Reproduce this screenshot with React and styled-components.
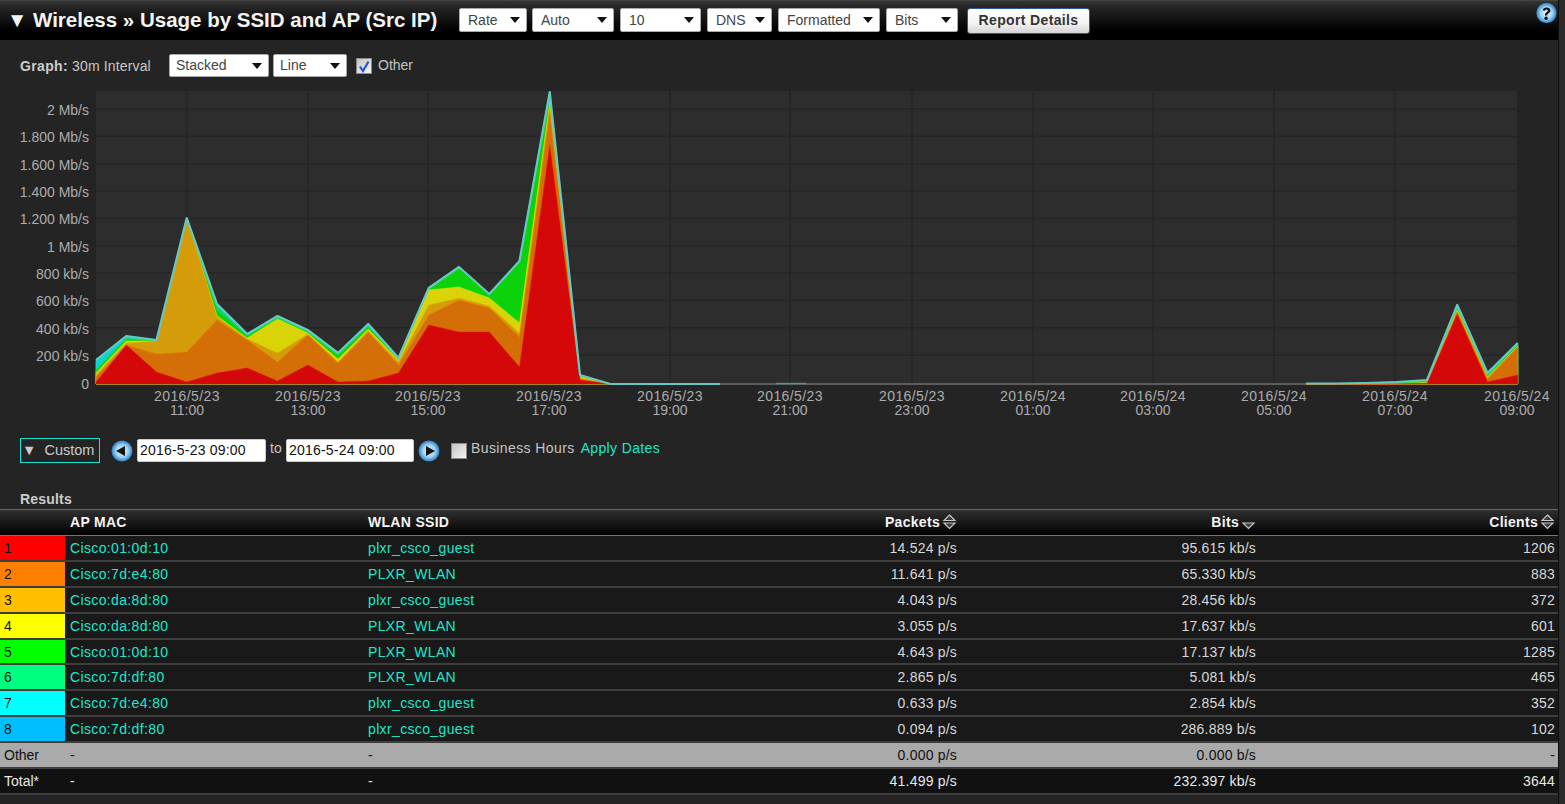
import React from "react";
import styled, { createGlobalStyle } from "styled-components";

const Global = createGlobalStyle`
  html, body { margin: 0; padding: 0; background: #2b2b2b; height: 100%; overflow: hidden; }
  body { font-family: "Liberation Sans", Arial, sans-serif; font-size: 14px; color: #ddd; }
`;

const Page = styled.div`
  width: 1558px;
  height: 804px;
  background: #242424;
  border-right: 1px solid #0c0c0c;
  display: flex;
  flex-direction: column;
`;

const Header = styled.header`
  height: 39px;
  flex: none;
  border-top: 1px solid #444;
  background: linear-gradient(#343434 0, #222 8px, #000 30px, #000 100%);
  display: flex;
  align-items: flex-start;
  padding-left: 7px;
`;

const Title = styled.h1`
  margin: 3px 0 0;
  width: 452px;
  flex: none;
  font-size: 20.5px;
  line-height: 32px;
  font-weight: 700;
  color: #f4f4f4;
  white-space: nowrap;
`;

const Selects = styled.div`
  display: flex;
  gap: ${(p) => p.$gap || 6}px;
  margin-top: ${(p) => p.$top || 0}px;
`;

const SelectBox = styled.div`
  box-sizing: border-box;
  width: ${(p) => p.$w}px;
  height: ${(p) => p.$h || 24}px;
  margin-left: ${(p) => p.$ml || 0}px;
  background: #fff;
  border: 1px solid #aaa;
  border-radius: 2px;
  color: #444;
  font-size: 14px;
  line-height: ${(p) => (p.$h || 24) - 2}px;
  padding-left: ${(p) => p.$pad || 8}px;
  position: relative;
  flex: none;
  &::after {
    content: "";
    position: absolute;
    right: 6px;
    top: 50%;
    margin-top: -3px;
    border-left: 5px solid transparent;
    border-right: 5px solid transparent;
    border-top: 6px solid #111;
  }
`;

const ReportButton = styled.button`
  box-sizing: border-box;
  width: 123px;
  height: 26px;
  margin: 7px 0 0 9px;
  padding: 0 0 2px;
  background: linear-gradient(#fff, #f2f2f2 60%, #d4d4d4);
  border: 1px solid #2d5d8d;
  border-radius: 3px;
  color: #333;
  font-family: inherit;
  font-weight: 700;
  font-size: 14px;
  letter-spacing: 0.35px;
`;

const HelpWrap = styled.div`
  margin: 1px 1px 0 auto;
  line-height: 0;
`;

const GraphBar = styled.div`
  height: 23px;
  margin-top: 14px;
  padding-left: 20px;
  display: flex;
  align-items: center;
  flex: none;
  color: #c8c8c8;
`;

const GraphLabel = styled.span`
  width: 149px;
  flex: none;
  font-size: 14px;
  letter-spacing: 0.15px;
  b { color: #ccc; font-weight: 700; letter-spacing: 0.35px; }
`;

const CheckLabel = styled.span`
  color: ${(p) => p.$color || "#c4c4c4"};
  margin-left: ${(p) => p.$ml || 0}px;
  font-size: 14px;
  letter-spacing: ${(p) => p.$ls || 0}px;
  position: relative;
  top: ${(p) => p.$up || 0}px;
`;

const Box = styled.span`
  box-sizing: border-box;
  display: inline-flex;
  align-items: center;
  justify-content: center;
  width: 16px;
  height: 16px;
  flex: none;
  border: 1px solid #8a8a8a;
  background: linear-gradient(135deg, #c4c4c4, #f4f4f4);
  margin-left: ${(p) => p.$ml || 0}px;
`;

const ChartSvg = styled.svg`
  display: block;
  flex: none;
  width: 1558px;
  height: 339px;
  margin-top: 8px;
`;

const DateBar = styled.div`
  height: 25px;
  margin-top: 14px;
  padding-left: 20px;
  display: flex;
  align-items: center;
  flex: none;
`;

const CustomToggle = styled.div`
  box-sizing: border-box;
  width: 80px;
  height: 25px;
  border: 1px solid #1ee0cc;
  color: #ccc;
  font-size: 14.5px;
  line-height: 23px;
  padding-left: 1px;
  white-space: pre;
  margin-right: 11px;
  flex: none;
`;

const DateInput = styled.div`
  box-sizing: border-box;
  width: ${(p) => p.$w}px;
  height: 23px;
  background: #fff;
  border: 1px solid #ccc;
  border-radius: 2px;
  color: #111;
  font-size: 14px;
  letter-spacing: 0.2px;
  line-height: 20px;
  padding-left: 2px;
  margin-left: ${(p) => p.$ml || 0}px;
  flex: none;
`;

const ToWord = styled.span`
  color: #c4c4c4;
  width: 20px;
  padding-left: 4px;
  box-sizing: border-box;
  flex: none;
  position: relative;
  top: -3px;
`;

const Spacer = styled.span`
  width: ${(p) => p.$w}px;
  flex: none;
`;

const ApplyLink = styled.a`
  color: #1ee6cc;
  margin-left: 6px;
  font-size: 14px;
  letter-spacing: 0.35px;
  position: relative;
  top: -3px;
`;

const ResultsTitle = styled.div`
  margin-top: 28px;
  padding-left: 20px;
  height: 18px;
  line-height: 16px;
  font-weight: 700;
  letter-spacing: 0.2px;
  color: #ccc;
  flex: none;
`;

const TableGrid = styled.div`
  flex: none;
`;

const COLUMNS = "65px 298px 300px 299px 299px 297px";

const HeadRow = styled.div`
  box-sizing: border-box;
  height: 27px;
  display: grid;
  grid-template-columns: ${COLUMNS};
  align-items: center;
  border-top: 1px solid #666;
  border-bottom: 1px solid #777;
  background: linear-gradient(#303030, #181818 50%, #000);
  color: #f4f4f4;
  font-weight: 700;
  letter-spacing: 0.3px;
`;

const HeadCell = styled.div`
  padding: 0 ${(p) => (p.$last ? 3 : 5)}px 2px 5px;
  display: flex;
  align-items: center;
  justify-content: ${(p) => (p.$right ? "flex-end" : "flex-start")};
  gap: 2px;
`;

const Row = styled.div`
  box-sizing: border-box;
  height: 25.9px;
  display: grid;
  grid-template-columns: ${COLUMNS};
  align-items: stretch;
  background: ${(p) => p.$bg || "#191919"};
  color: ${(p) => p.$fg || "#d8d8d8"};
  border-bottom: 2px solid ${(p) => p.$sep || "#3e3e3e"};
`;

const Cell = styled.div`
  padding: 0 ${(p) => (p.$last ? 3 : 5)}px 0 5px;
  display: flex;
  align-items: center;
  justify-content: ${(p) => (p.$right ? "flex-end" : "flex-start")};
  white-space: nowrap;
  letter-spacing: ${(p) => (p.$right ? 0.2 : 0)}px;
`;

const ColorCell = styled(Cell)`
  background: ${(p) => p.$color};
  color: #111;
  padding-left: 4px;
`;

const LabelCell = styled(Cell)`
  padding-left: 4px;
`;

const Link = styled.span`
  color: #1ee6cc;
  letter-spacing: 0.36px;
`;

const COLORS = ["#ff0000", "#ff8000", "#ffbf00", "#ffff00", "#00ff00", "#00ff80", "#00ffff", "#00bfff"];

const ROWS = [
  ["Cisco:01:0d:10", "plxr_csco_guest", "14.524 p/s", "95.615 kb/s", "1206"],
  ["Cisco:7d:e4:80", "PLXR_WLAN", "11.641 p/s", "65.330 kb/s", "883"],
  ["Cisco:da:8d:80", "plxr_csco_guest", "4.043 p/s", "28.456 kb/s", "372"],
  ["Cisco:da:8d:80", "PLXR_WLAN", "3.055 p/s", "17.637 kb/s", "601"],
  ["Cisco:01:0d:10", "PLXR_WLAN", "4.643 p/s", "17.137 kb/s", "1285"],
  ["Cisco:7d:df:80", "PLXR_WLAN", "2.865 p/s", "5.081 kb/s", "465"],
  ["Cisco:7d:e4:80", "plxr_csco_guest", "0.633 p/s", "2.854 kb/s", "352"],
  ["Cisco:7d:df:80", "plxr_csco_guest", "0.094 p/s", "286.889 b/s", "102"],
];

const SUMMARY = [
  { label: "Other", bg: "#aaaaaa", fg: "#111", sep: "#3e3e3e", vals: ["0.000 p/s", "0.000 b/s", "-"] },
  { label: "Total*", bg: "#111111", fg: "#e8e8e8", sep: "#3e3e3e", vals: ["41.499 p/s", "232.397 kb/s", "3644"] },
];

/* ---------- chart data (page pixel coordinates) ---------- */
const X0 = 96;
const DX = 30.25;
const BASE = 384;
const flat = Array(22).fill(BASE);
const build = (head, tail) => [...head, ...flat, ...tail];

const LAYERS = [
  { c: "#0c9cd4", s: "#40c8e0", d: build([360, 336, 340, 218, 304, 334, 316, 330, 353, 324, 358, 288, 267, 294, 261, 92, 375, 384], [383.5, 383.5, 383, 382, 380, 305, 373, 343]) },
  { c: "#0cd2d2", s: "#30e8e8", d: build([361, 337, 340.5, 218, 304.5, 334, 316, 330, 353, 324.5, 358, 288, 267, 294, 261, 92.5, 375, 384], [383.5, 383.5, 383, 382, 380.5, 305.5, 373, 343]) },
  { c: "#0cd07a", s: "#10e090", d: build([369, 338, 341, 218, 306, 335, 317, 331, 354, 326, 358.5, 288.5, 267, 295, 262, 94, 376, 384], [384, 384, 383.5, 383, 381, 306, 374, 344]) },
  { c: "#0cd20c", s: "#20e020", d: build([371, 339, 341, 218, 310, 336, 318, 332, 355, 327, 359, 289, 267, 295.5, 262, 96, 376.5, 384], [384, 384, 384, 383, 382, 308, 376, 345]) },
  { c: "#d8d408", s: "#f0f000", d: build([373, 341, 341, 218, 316, 338, 319, 333, 359, 329, 360, 290, 287, 298, 323, 102, 377, 384], [384, 384, 384, 383.5, 382.5, 310, 377, 346]) },
  { c: "#d49c08", s: "#f0b000", d: build([375, 343, 341, 218, 317, 339, 353, 334, 362, 331, 362, 305, 298, 306, 333, 106, 378, 384], [384, 384, 384, 384, 383, 311, 378, 346.5]) },
  { c: "#d46f08", s: "#f08000", d: build([377, 345, 354, 352, 320, 340, 362, 335, 363, 332, 365, 315, 300, 308, 337, 112, 379, 384], [384, 384, 384, 384, 383, 312, 379, 347]) },
  { c: "#d40808", s: "#f01010", d: build([382, 345, 372, 382, 373, 368, 381, 365, 382, 381, 373, 325, 332, 332, 367, 145, 380, 384], [384, 384, 384, 384, 383.5, 314, 382, 375]) },
];

const px = (i) => X0 + DX * i;
const areaPath = (d) => `M${X0},${BASE} ` + d.map((y, i) => `L${px(i)},${y}`).join(" ") + ` L${px(47)},${BASE} Z`;
const linePts = (d, a = 0, b = 47) => d.slice(a, b + 1).map((y, i) => `${px(i + a)},${y}`).join(" ");

const YTICKS = ["0", "200 kb/s", "400 kb/s", "600 kb/s", "800 kb/s", "1 Mb/s", "1.200 Mb/s", "1.400 Mb/s", "1.600 Mb/s", "1.800 Mb/s", "2 Mb/s"];
const XTICKS = [
  [187, "2016/5/23", "11:00"], [308, "2016/5/23", "13:00"], [428, "2016/5/23", "15:00"], [549, "2016/5/23", "17:00"],
  [670, "2016/5/23", "19:00"], [790, "2016/5/23", "21:00"], [912, "2016/5/23", "23:00"], [1033, "2016/5/24", "01:00"],
  [1153, "2016/5/24", "03:00"], [1274, "2016/5/24", "05:00"], [1395, "2016/5/24", "07:00"], [1517, "2016/5/24", "09:00"],
];

const AxisText = styled.text`
  font-family: "Liberation Sans", Arial, sans-serif;
  font-size: 14px;
  fill: #acacac;
`;

const Chart = () => {
  const top = LAYERS[0].d;
  return (
    <ChartSvg viewBox="0 85 1558 339">
      <rect x={X0} y={91} width={1421} height={293} fill="#2d2d2d" />
      {YTICKS.map((t, i) => {
        const y = 382.5 - i * 27.35;
        return (
          <g key={t}>
            {i > 0 && <line x1={X0} x2={1517} y1={y} y2={y} stroke="#262626" strokeWidth="1.5" />}
            <AxisText x={89} y={y + 6} textAnchor="end">{t}</AxisText>
          </g>
        );
      })}
      {XTICKS.map(([x, a, b]) => (
        <g key={b + a}>
          {x < 1517 && <line x1={x} x2={x} y1={91} y2={384} stroke="#262626" strokeWidth="1.5" />}
          <AxisText x={x} y={401} textAnchor="middle" letterSpacing="0.4">{a}</AxisText>
          <AxisText x={x} y={415} textAnchor="middle">{b}</AxisText>
        </g>
      ))}
      {LAYERS.map((l) => (
        <path key={l.c} d={areaPath(l.d)} fill={l.c} stroke={l.s} strokeOpacity="0.55" strokeWidth="0.8" strokeLinejoin="round" />
      ))}
      <line x1={610} x2={1306} y1={384} y2={384} stroke="#5c5c5c" strokeWidth="1.8" />
      <polyline points={linePts(top, 0, 20) + " 720,384"} fill="none" stroke="#66c8c2" strokeWidth="2.2" strokeLinejoin="round" />
      <polyline points={linePts(top, 40, 47)} fill="none" stroke="#66c8c2" strokeWidth="2.2" strokeLinejoin="round" />
      <line x1={776} x2={806} y1={383.5} y2={383.5} stroke="#4a9a94" strokeWidth="1.4" />
    </ChartSvg>
  );
};

/* ---------- small drawn icons ---------- */
const OrbDefs = ({ id }) => (
  <defs>
    <radialGradient id={id} cx="0.5" cy="0.5" r="0.55">
      <stop offset="0" stopColor="#f0f8ff" />
      <stop offset="0.55" stopColor="#9ad0f0" />
      <stop offset="0.85" stopColor="#3a8cd0" />
      <stop offset="1" stopColor="#27567f" />
    </radialGradient>
  </defs>
);

const OrbSvg = styled.svg`
  flex: none;
`;

const ArrowOrb = ({ id, dir }) => (
  <OrbSvg width="22" height="22" viewBox="0 0 22 22">
    <OrbDefs id={id} />
    <circle cx="11" cy="11" r="10.5" fill={`url(#${id})`} />
    <polygon points={dir === "left" ? "5,11 14,6 14,16" : "17,11 8,6 8,16"} fill="#151515" />
  </OrbSvg>
);

const HelpOrb = () => (
  <OrbSvg width="21" height="22" viewBox="0 0 21 22">
    <OrbDefs id="helporb" />
    <circle cx="10.5" cy="11" r="10.2" fill="url(#helporb)" />
    <path d="M6.8 8.2 C7 5 14 4.4 14.4 8.4 C14.6 11 11.4 11 11.2 13.4 L9 13.4 C8.8 10 12 10 11.8 8.4 C11.6 7 9.2 7.2 9.1 8.8 Z" fill="#111" />
    <circle cx="10.1" cy="16.2" r="1.7" fill="#111" />
  </OrbSvg>
);

const SortIcon = ({ up = true }) => (
  <OrbSvg width="15" height="16" viewBox="0 0 15 16">
    {up && <polygon points="7.5,1 13,6.5 2,6.5" fill="#3a3a3a" stroke="#c8c8c8" strokeWidth="1.2" />}
    <polygon points="2,9 13,9 7.5,14.5" fill="#3a3a3a" stroke="#c8c8c8" strokeWidth="1.2" />
  </OrbSvg>
);

const Check = () => (
  <svg width="14" height="14" viewBox="0 0 14 14">
    <path d="M3 7.5 L6 12 L11.5 2.5" fill="none" stroke="#2058c8" strokeWidth="2.2" />
  </svg>
);

export default function App() {
  return (
    <Page>
      <Global />
      <Header>
        <Title>▼ Wireless » Usage by SSID and AP (Src IP)</Title>
        <Selects $top={7}>
          <SelectBox $w={68}>Rate</SelectBox>
          <SelectBox $w={82} $ml={-1}>Auto</SelectBox>
          <SelectBox $w={81}>10</SelectBox>
          <SelectBox $w={65}>DNS</SelectBox>
          <SelectBox $w={102}>Formatted</SelectBox>
          <SelectBox $w={72}>Bits</SelectBox>
        </Selects>
        <ReportButton>Report Details</ReportButton>
        <HelpWrap><HelpOrb /></HelpWrap>
      </Header>

      <GraphBar>
        <GraphLabel><b>Graph:</b> 30m Interval</GraphLabel>
        <Selects $gap={4}>
          <SelectBox $w={100} $h={23} $pad={6}>Stacked</SelectBox>
          <SelectBox $w={74} $h={23} $pad={6}>Line</SelectBox>
        </Selects>
        <Box $ml={9}><Check /></Box>
        <CheckLabel $ml={6} $up={-1}>Other</CheckLabel>
      </GraphBar>

      <Chart />

      <DateBar>
        <CustomToggle>▼  Custom</CustomToggle>
        <ArrowOrb id="prevorb" dir="left" />
        <DateInput $w={129} $ml={4}>2016-5-23 09:00</DateInput>
        <ToWord>to</ToWord>
        <DateInput $w={128}>2016-5-24 09:00</DateInput>
        <Spacer $w={4} />
        <ArrowOrb id="nextorb" dir="right" />
        <Box $ml={11} />
        <CheckLabel $ml={4} $up={-3} $ls={0.4}>Business Hours</CheckLabel>
        <ApplyLink>Apply Dates</ApplyLink>
      </DateBar>

      <ResultsTitle>Results</ResultsTitle>

      <TableGrid>
        <HeadRow>
          <HeadCell />
          <HeadCell>AP MAC</HeadCell>
          <HeadCell>WLAN SSID</HeadCell>
          <HeadCell $right>Packets<SortIcon /></HeadCell>
          <HeadCell $right>Bits<SortIcon up={false} /></HeadCell>
          <HeadCell $right $last>Clients<SortIcon /></HeadCell>
        </HeadRow>
        {ROWS.map((r, i) => (
          <Row key={i}>
            <ColorCell $color={COLORS[i]}>{i + 1}</ColorCell>
            <Cell><Link>{r[0]}</Link></Cell>
            <Cell><Link>{r[1]}</Link></Cell>
            <Cell $right>{r[2]}</Cell>
            <Cell $right>{r[3]}</Cell>
            <Cell $right $last>{r[4]}</Cell>
          </Row>
        ))}
        {SUMMARY.map((s) => (
          <Row key={s.label} $bg={s.bg} $fg={s.fg} $sep={s.sep}>
            <LabelCell>{s.label}</LabelCell>
            <Cell>-</Cell>
            <Cell>-</Cell>
            <Cell $right>{s.vals[0]}</Cell>
            <Cell $right>{s.vals[1]}</Cell>
            <Cell $right $last>{s.vals[2]}</Cell>
          </Row>
        ))}
      </TableGrid>
    </Page>
  );
}
